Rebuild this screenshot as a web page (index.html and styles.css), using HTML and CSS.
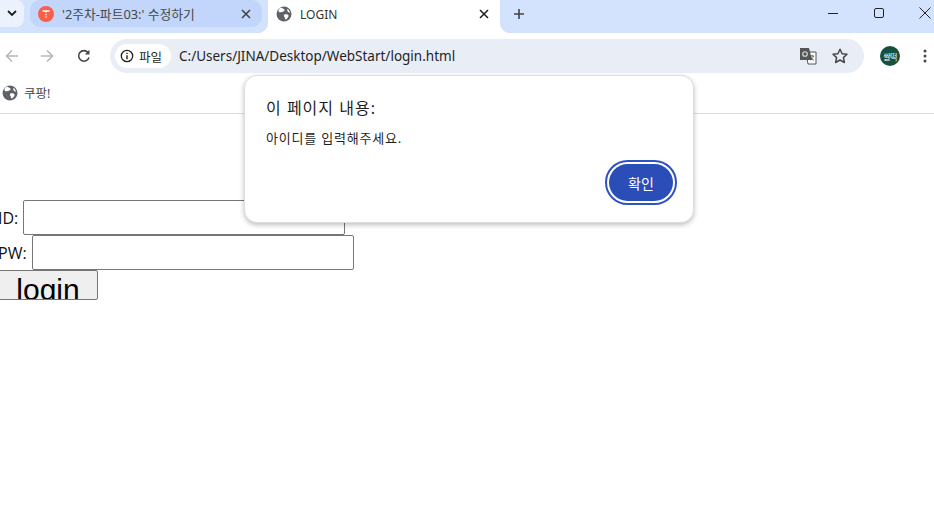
FILE: index.html
```html
<!DOCTYPE html>
<html lang="ko">
<head>
<meta charset="utf-8">
<title>LOGIN</title>
<link rel="stylesheet" href="styles.css">
</head>
<body>
<header class="chrome">
  <div class="tabstrip">
    <div class="tab-search"><svg width="10" height="7" viewBox="0 0 10 7"><path d="M1 1l4 4 4-4" fill="none" stroke="#1f1f1f" stroke-width="1.8"/></svg></div>
    <div class="tab tab-inactive">
      <svg class="favicon" width="16" height="16" viewBox="0 0 16 16"><circle cx="8" cy="8" r="8" fill="#f8604a"/><path d="M4.500 5h7M8 5v1.500M8 8v1.200M8 10.500v1.200M5.500 7h.01M10.500 7h.01" stroke="#fff" stroke-width="1.300" fill="none"/></svg>
      <span class="tab-title">'2주차-파트03:' 수정하기</span>
      <svg class="tab-close" width="10" height="10" viewBox="0 0 10 10"><path d="M1 1l8 8M9 1l-8 8" stroke="#444" stroke-width="1.600"/></svg>
    </div>
    <div class="tab tab-active">
      <svg class="favicon" width="16" height="16" viewBox="0 0 16 16"><use href="#globe"/></svg>
      <span class="tab-title">LOGIN</span>
      <svg class="tab-close" width="10" height="10" viewBox="0 0 10 10"><path d="M1 1l8 8M9 1l-8 8" stroke="#222" stroke-width="1.600"/></svg>
    </div>
    <svg class="new-tab" width="12" height="12" viewBox="0 0 12 12"><path d="M6 1v10M1 6h10" stroke="#444" stroke-width="1.600"/></svg>
    <div class="window-controls">
      <svg width="12" height="12" viewBox="0 0 12 12"><path d="M1 6.500h10" stroke="#222" stroke-width="1"/></svg>
      <svg width="12" height="12" viewBox="0 0 12 12"><rect x="1.500" y="1.500" width="9" height="9" rx="1.500" fill="none" stroke="#222"/></svg>
      <svg width="12" height="12" viewBox="0 0 12 12"><path d="M.5.5l11 11M11.500 .5l-11 11" stroke="#222" stroke-width="1"/></svg>
    </div>
  </div>
  <div class="toolbar">
    <svg class="nav" width="16" height="16" viewBox="0 0 16 16"><path d="M14 8H2.500M8 2.500L2.500 8 8 13.500" fill="none" stroke="#b4b6ba" stroke-width="1.500"/></svg>
    <svg class="nav" width="16" height="16" viewBox="0 0 16 16"><path d="M2 8h11.500M8 2.500L13.500 8 8 13.500" fill="none" stroke="#b4b6ba" stroke-width="1.500"/></svg>
    <svg class="nav" width="16" height="16" viewBox="0 0 16 16"><path d="M13 9.500A5.300 5.300 0 1 1 12 4.500" fill="none" stroke="#474747" stroke-width="1.600"/><path d="M13.500 1.800v4.700H8.800z" fill="#474747"/></svg>
    <div class="omnibox">
      <div class="chip">
        <svg width="14" height="14" viewBox="0 0 14 14"><circle cx="7" cy="7" r="5.700" fill="none" stroke="#1f1f1f" stroke-width="1.300"/><path d="M7 6.200v4M7 3.800v1.300" stroke="#1f1f1f" stroke-width="1.400"/></svg>
        <span>파일</span>
      </div>
      <span class="url">C:/Users/JINA/Desktop/WebStart/login.html</span>
      <svg class="translate" width="18" height="18" viewBox="0 0 18 18"><path d="M7 5h10v12H9z" fill="#fff" stroke="#555" stroke-width="1"/><path d="M1 1h9l3 12H1z" fill="#555"/><circle cx="6" cy="7" r="2.300" fill="none" stroke="#ddd" stroke-width="1.100"/><path d="M11 9h4M13 8v1M14.500 9c-.5 2-2 3.500-3.500 4M11.500 10c.5 1.500 2 2.700 3.500 3.300" fill="none" stroke="#444" stroke-width=".8"/></svg>
      <svg class="star" width="18" height="18" viewBox="0 0 18 18"><path d="M9 2.200l2.100 4.500 4.900.6-3.600 3.300 1 4.900L9 13l-4.400 2.500 1-4.900L2 7.300l4.900-.6z" fill="none" stroke="#474747" stroke-width="1.500" stroke-linejoin="round"/></svg>
    </div>
    <div class="avatar">쌀떡</div>
    <svg class="menu" width="4" height="14" viewBox="0 0 4 14"><circle cx="2" cy="2" r="1.500" fill="#474747"/><circle cx="2" cy="7" r="1.500" fill="#474747"/><circle cx="2" cy="12" r="1.500" fill="#474747"/></svg>
  </div>
  <div class="bookmarks">
    <svg width="16" height="16" viewBox="0 0 16 16"><use href="#globe"/></svg>
    <span>쿠팡!</span>
  </div>
</header>

<main class="page">
  <form class="login">
    <div class="row">ID: <input class="field" type="text"></div>
    <div class="row">PW: <input class="field" type="password"></div>
    <button class="submit" type="button">login</button>
  </form>
</main>

<div class="dialog" role="alertdialog">
  <h1 class="dialog-title">이 페이지 내용:</h1>
  <p class="dialog-msg">아이디를 입력해주세요.</p>
  <div class="dialog-actions"><button class="ok" type="button">확인</button></div>
</div>

<svg class="defs" width="0" height="0">
  <symbol id="globe" viewBox="0 0 16 16">
    <circle cx="8" cy="8" r="7.500" fill="#5f6368"/>
    <path d="M5 1.500c1 1 2.800 1 3.500 2.200S6.500 6 5.500 6 3 7 2.500 5 4 2 5 1.500zM8.500 8.500c1.500-.5 3.500 0 4 1s-1.500 3.500-2.500 4-1-2-1.500-2.500-1-2 0-2.500zM11.500 3c1 .5 2.300 2 2.500 3.500-1 0-2-.5-2.500-1.500s-.5-1.500 0-2z" fill="#fff"/>
  </symbol>
</svg>
</body>
</html>
```
FILE: styles.css
```css
* { box-sizing: border-box; }
html, body { margin: 0; height: 100%; overflow: hidden; background: #fff; }
body { font-family: "Noto Sans", "Noto Sans CJK KR", sans-serif; color: #1f1f1f; }
.defs { display: block; }

.chrome { display: flex; flex-direction: column; }
.tabstrip { height: 33px; background: #d3e3fd; display: flex; align-items: flex-start; position: relative; }
.tab-search { width: 24px; height: 27px; background: #ecf2fd; border-radius: 0 8px 8px 0; display: flex; align-items: center; justify-content: center; margin-right: 6px; }
.tab { display: flex; align-items: center; font-size: 12px; }
.tab-inactive { width: 232px; height: 27px; background: #c2d6fb; border-radius: 10px; padding: 0 11px 0 8px; color: #45474a; font-size: 12.800px; }
.tab-active { width: 232px; height: 33px; background: #fff; margin-left: 6px; padding: 0 11px 5px 8px; color: #333; position: relative; }
.tab-active::before, .tab-active::after { content: ""; position: absolute; bottom: 0; width: 10px; height: 10px; }
.tab-active::before { left: -10px; background: radial-gradient(circle at 0 0, #d3e3fd 9.500px, #fff 10.500px); }
.tab-active::after { right: -10px; background: radial-gradient(circle at 100% 0, #d3e3fd 9.500px, #fff 10.500px); }
.tab-title { flex: 1; margin-left: 8px; white-space: nowrap; }
.new-tab { margin: 8px 0 0 13px; }
.window-controls { margin-left: auto; display: flex; gap: 34px; padding: 7px 3px 0 0; }
.window-controls svg { display: block; }

.toolbar { height: 46px; background: #fff; display: flex; align-items: center; padding: 0 7px 0 4px; }
.nav { margin-right: 19px; flex: none; }
.nav:nth-of-type(2) { margin-right: 21px; }
.nav:nth-of-type(3) { margin-right: 18px; }
.omnibox { flex: 1; height: 34px; background: #e9edf6; border-radius: 17px; display: flex; align-items: center; padding: 0 15px 0 5px; }
.chip { width: 56px; height: 24px; background: #fff; border-radius: 12px; display: flex; align-items: center; gap: 5px; padding-left: 5px; font-size: 12.500px; }
.url { margin-left: 8px; font-size: 13.500px; color: #1f1f1f; flex: 1; white-space: nowrap; }
.translate { margin-right: 14px; }
.avatar { width: 20px; height: 20px; border-radius: 50%; background: #16513f; color: #fff; font-size: 8px; display: flex; align-items: center; justify-content: center; margin-left: 16px; letter-spacing: -.5px; flex: none; }
.menu { margin-left: 23px; flex: none; }

.bookmarks { height: 35px; border-bottom: 1px solid #dcdcdc; background: #fff; display: flex; align-items: center; gap: 6px; padding: 0 0 7px 2px; font-size: 12.500px; color: #45474a; }

.page { padding-top: 86px; }
.login { margin-left: -2px; font-family: "Open Sans", "Noto Sans CJK KR", sans-serif; font-size: 16px; color: #111; }
.row { height: 35px; display: flex; align-items: center; gap: 5px; }
.field { width: 322px; height: 35px; border: 1px solid #767676; border-radius: 2px; background: #fff; padding: 0; margin: 0; }
.submit { display: block; width: 100px; height: 30px; padding: 0; background: #efefef; border: 1px solid #767676; border-radius: 2px; font: 30px/37px "Liberation Sans", sans-serif; color: #000; overflow: hidden; }

.dialog { position: absolute; left: 244px; top: 75px; width: 450px; height: 148px; background: #fff; border: 1px solid #dedede; border-radius: 13px; box-shadow: 0 2px 5px rgba(0,0,0,.25); padding: 21px 20px 0 21px; display: flex; flex-direction: column; }
.dialog-title { margin: 0; font-size: 16px; font-weight: 400; line-height: 22px; letter-spacing: 1px; color: #1f1f1f; }
.dialog-msg { margin: 10px 0 0; font-size: 13px; line-height: 18px; letter-spacing: .8px; color: #1f1f1f; }
.dialog-actions { display: flex; justify-content: flex-end; margin-top: 17px; }
.ok { width: 64px; height: 37px; border: 0; border-radius: 19px; background: #2b4db8; color: #fff; font: 14px "Noto Sans", "Noto Sans CJK KR", sans-serif; outline: 2px solid #2f52c4; outline-offset: 2px; }
```
